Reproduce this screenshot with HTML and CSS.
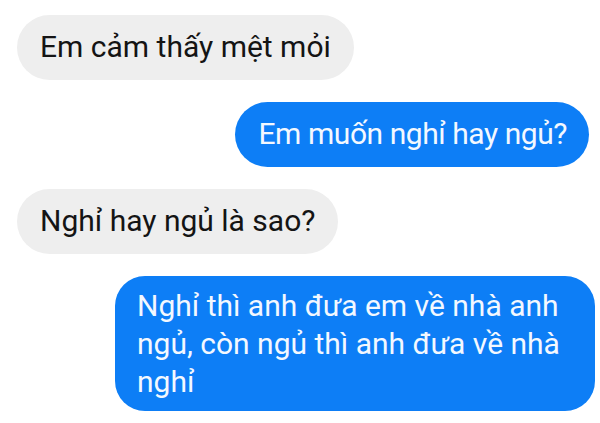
FILE: index.html
```html
<!DOCTYPE html>
<html lang="vi">
<head>
<meta charset="utf-8">
<link rel="stylesheet" href="styles.css">
</head>
<body>
<div class="chat">
  <div class="bubble in">Em cảm thấy mệt mỏi</div>
  <div class="bubble out tight">Em muốn nghỉ hay ngủ?</div>
  <div class="bubble in">Nghỉ hay ngủ là sao?</div>
  <div class="bubble out multi">Nghỉ thì anh đưa em về nhà anh ngủ, còn ngủ thì anh đưa về nhà nghỉ</div>
</div>
</body>
</html>
```
FILE: styles.css
```css
html, body {
  margin: 0;
  padding: 0;
  background: #ffffff;
}
.chat {
  display: flex;
  flex-direction: column;
  gap: 22px;
  padding: 15px 11px 0 17px;
  font-family: Roboto, "Noto Sans", sans-serif;
  font-size: 30px;
  line-height: 38px;
}
.bubble {
  box-sizing: border-box;
  padding: 13px 23px 14px 23px;
  border-radius: 33px;
}
.in {
  align-self: flex-start;
  background: #eeeeee;
  color: #141414;
}
.out {
  align-self: flex-end;
  background: #0d7ef6;
  color: #f3f8ff;
}
.tight {
  letter-spacing: -0.45px;
  padding-right: 22px;
}
.multi {
  max-width: 480px;
  padding: 11px 22px 10px 22px;
  border-radius: 30px;
  margin-right: -6px;
}
```
